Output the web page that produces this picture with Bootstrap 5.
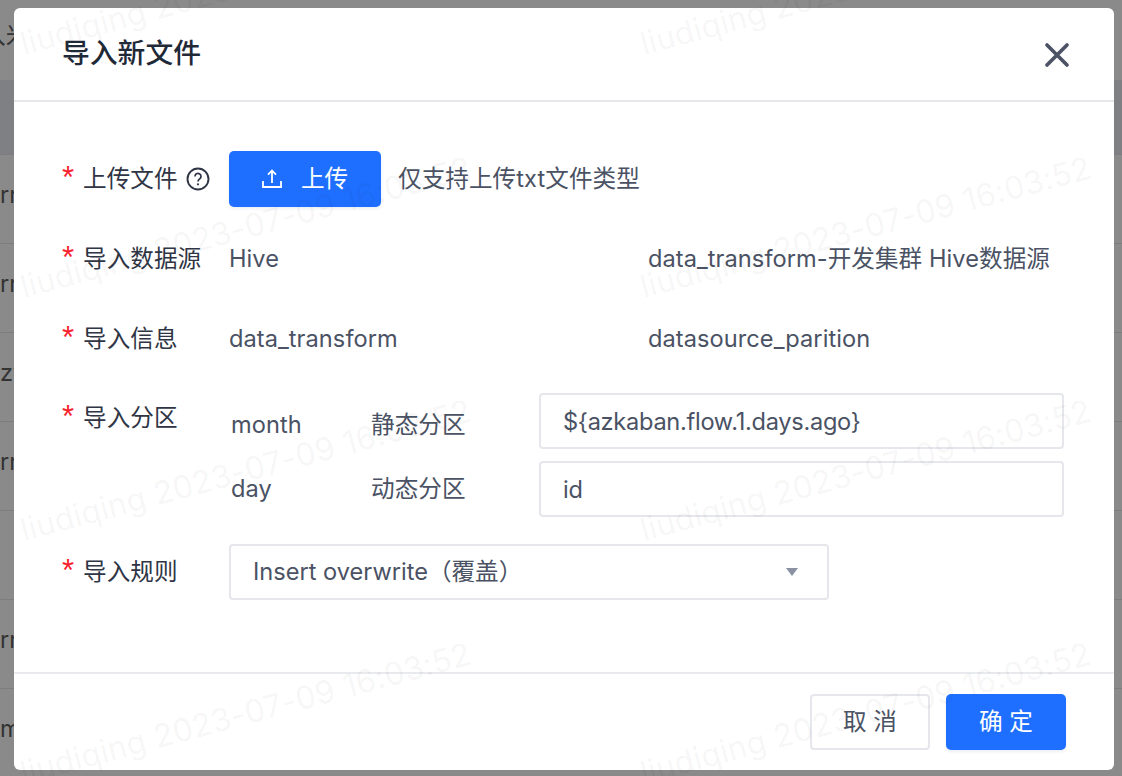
<!DOCTYPE html>
<html lang="zh-CN">
<head>
<meta charset="utf-8">
<title>导入新文件</title>
<link href="https://cdn.jsdelivr.net/npm/bootstrap@5.3.0/dist/css/bootstrap.min.css" rel="stylesheet">
<style>
html,body{height:776px;overflow:hidden;margin:0}
body{background:#8a8a8a;font-family:Inter,"Noto Sans CJK SC",sans-serif;font-size:23.6px;letter-spacing:.06px;color:#4a5264;position:relative}
.bg-rows{height:776px;overflow:hidden}
.bg-row{display:flex;align-items:center;overflow:hidden;padding-right:1108px;padding-bottom:8px;border-bottom:1px solid #7d7d7d;color:#333;white-space:nowrap;height:89px}
.bg-first{height:80px;border:0}
.bg-clip{margin-left:-18px}
.bg-head{height:75px;background:#7f8084}
.dlg{position:absolute;left:14px;top:8px;width:1100px;height:762px;border-radius:6px;border:0;display:flex;flex-direction:column;background:#fff}
.dlg .modal-header{height:94px;padding:0 44px 0 48px;border-bottom:2px solid #e5e7eb;flex:none;justify-content:space-between}
.dlg-title{font-size:27.8px;font-weight:500;color:#1f2937;margin:0;line-height:1;letter-spacing:0}
.x-btn{background:none;border:0;padding:0;line-height:0;margin-top:2px}
.dlg .modal-body{padding:49px 50px 0 49px;flex:1;display:flex;flex-direction:column}
.f-row{display:flex;margin-bottom:24px;min-height:56px;align-items:center}
.f-tall{margin-bottom:26px}
.f-part{align-items:flex-start;margin-bottom:27px}
.f-part .f-label{line-height:50px}
.f-label{width:166px;flex:none;color:#2f3545;display:flex;align-items:center;white-space:nowrap}
.req{color:#f5222d;width:20px;flex:none;line-height:1;font-size:31px;margin-top:-3px;margin-left:-1px;margin-right:1px;font-family:"Liberation Sans",sans-serif}
.help{margin-left:8px}
.btn-main{background:#1e6fff;border:0;color:#fff;height:56px;border-radius:5px;font-size:23.6px;box-shadow:0 2px 3px rgba(30,60,120,.08);padding:0}
.btn-main:hover{background:#1e6fff;color:#fff}
.btn-up{width:152px;display:flex;align-items:center;justify-content:center;gap:19px}
.hint{margin-left:17px}
.c-one{width:419px;flex:none}
.p-rows{flex:1;display:flex;flex-direction:column;gap:12px}
.p-line{display:flex;align-items:center;height:56px}
.p-name{width:142px;padding-left:2px;flex:none}
.p-type{width:168px;flex:none}
.p-first .p-name,.p-first .p-type{padding-top:7px}
.dlg .form-control,.dlg .form-select{height:56px;border:2px solid #e6e7ec;border-radius:4px;font-size:23.6px;color:#4a5264;padding:0 22px;box-shadow:none;background-color:transparent}
.dlg .form-control{letter-spacing:-.28px}
.dlg .form-select{width:600px;background-image:url("data:image/svg+xml,%3Csvg xmlns='http://www.w3.org/2000/svg' viewBox='0 0 12 8'%3E%3Cpath fill='%238a91a3' d='M0 0h12L6 8z'/%3E%3C/svg%3E");background-size:12px 8px;background-position:right 29px center;background-repeat:no-repeat}
.dlg .modal-footer{height:98px;padding:20px 48px 0 0;border-top:2px solid #e9eaee;flex:none;gap:16px;align-items:flex-start;justify-content:flex-end;flex-wrap:nowrap}
.dlg .modal-footer>*{margin:0}
.btn-foot{width:120px}
.btn-off{width:120px;height:56px;border:2px solid #e6e7ec;border-radius:4px;background:transparent;color:#4a5264;font-size:23.6px;padding:0}
.wm-layer{position:absolute;inset:0;pointer-events:none;overflow:hidden;display:grid;grid-template-columns:620px 620px;grid-auto-rows:243px;padding:25px 0 0 26px}
.wm{font-size:31.8px;letter-spacing:.2px;line-height:38px;color:rgba(0,0,0,.05);white-space:nowrap;transform:rotate(-15deg);transform-origin:0 100%;height:38px;font-family:Inter,sans-serif}
</style>
</head>
<body>
<div class="bg-rows">
  <div class="bg-row bg-first"><span class="bg-clip">入米</span></div>
  <div class="bg-row bg-head"></div>
  <div class="bg-row">rr</div>
  <div class="bg-row">rr</div>
  <div class="bg-row">zy</div>
  <div class="bg-row">rr</div>
  <div class="bg-row"></div>
  <div class="bg-row">rr</div>
  <div class="bg-row">m</div>
</div>

<div class="modal-content dlg">
  <div class="modal-header">
    <h5 class="dlg-title">导入新文件</h5>
    <button class="x-btn" type="button" aria-label="关闭">
      <svg width="26" height="26" viewBox="0 0 26 26"><path d="M3 3 23 23M23 3 3 23" stroke="#4b5263" stroke-width="3.7" stroke-linecap="round" fill="none"/></svg>
    </button>
  </div>
  <div class="modal-body">
    <div class="f-row">
      <div class="f-label"><span class="req">*</span>上传文件
        <svg class="help" width="24" height="24" viewBox="0 0 24 24"><circle cx="12" cy="12" r="10.5" fill="none" stroke="#2f3545" stroke-width="1.9"/><path d="M9 9.4a3 3 0 1 1 4.7 2.5c-1 .7-1.7 1.2-1.7 2.5" fill="none" stroke="#2f3545" stroke-width="1.7"/><circle cx="12" cy="17.3" r="1.1" fill="#2f3545"/></svg>
      </div>
      <button class="btn btn-main btn-up" type="button">
        <svg width="20" height="20" viewBox="0 0 20 20"><path d="M10 14V2M6 5.6 10 1.6l4 4M1 12v6h18v-6" fill="none" stroke="#fff" stroke-width="1.8"/></svg>
        <span>上传</span>
      </button>
      <span class="hint">仅支持上传txt文件类型</span>
    </div>
    <div class="f-row">
      <div class="f-label"><span class="req">*</span>导入数据源</div>
      <div class="c-one">Hive</div>
      <div>data_transform-开发集群 Hive数据源</div>
    </div>
    <div class="f-row f-tall">
      <div class="f-label"><span class="req">*</span>导入信息</div>
      <div class="c-one">data_transform</div>
      <div>datasource_parition</div>
    </div>
    <div class="f-row f-part">
      <div class="f-label"><span class="req">*</span>导入分区</div>
      <div class="p-rows">
        <div class="p-line p-first">
          <div class="p-name">month</div><div class="p-type">静态分区</div>
          <input class="form-control" type="text" value="${azkaban.flow.1.days.ago}">
        </div>
        <div class="p-line">
          <div class="p-name">day</div><div class="p-type">动态分区</div>
          <input class="form-control" type="text" value="id">
        </div>
      </div>
    </div>
    <div class="f-row">
      <div class="f-label"><span class="req">*</span>导入规则</div>
      <select class="form-select"><option>Insert overwrite（覆盖）</option></select>
    </div>
  </div>
  <div class="modal-footer">
    <button class="btn btn-off" type="button">取 消</button>
    <button class="btn btn-main btn-foot" type="button">确 定</button>
  </div>
</div>

<div class="wm-layer">
  <div class="wm">liudiqing 2023-07-09 16:03:52</div><div class="wm">liudiqing 2023-07-09 16:03:52</div>
  <div class="wm">liudiqing 2023-07-09 16:03:52</div><div class="wm">liudiqing 2023-07-09 16:03:52</div>
  <div class="wm">liudiqing 2023-07-09 16:03:52</div><div class="wm">liudiqing 2023-07-09 16:03:52</div>
  <div class="wm">liudiqing 2023-07-09 16:03:52</div><div class="wm">liudiqing 2023-07-09 16:03:52</div>
</div>
<script src="https://cdn.jsdelivr.net/npm/bootstrap@5.3.0/dist/js/bootstrap.bundle.min.js"></script>
</body>
</html>
